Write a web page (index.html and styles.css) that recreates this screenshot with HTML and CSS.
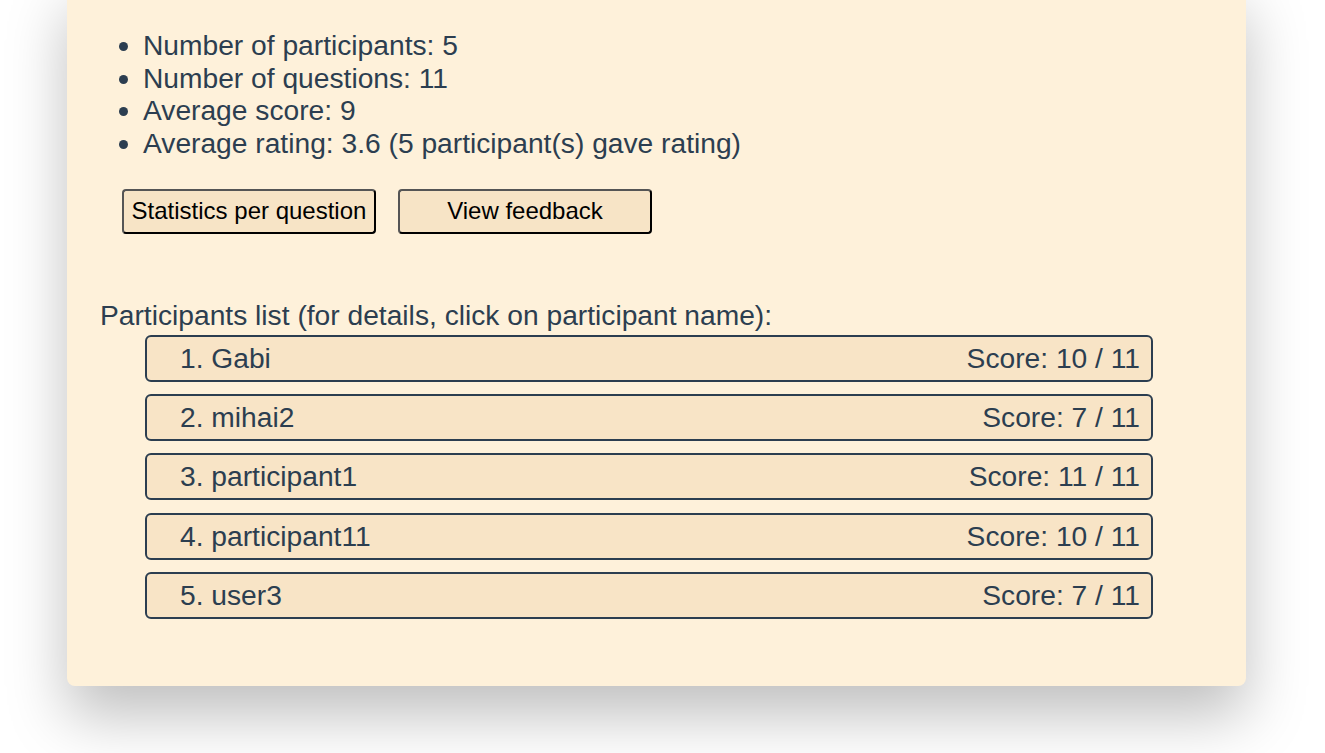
FILE: index.html
```html
<!DOCTYPE html>
<html>
<head>
<meta charset="utf-8">
<link rel="stylesheet" href="styles.css">
</head>
<body>
<div class="card">
  <ul class="stats">
    <li>Number of participants: 5</li>
    <li>Number of questions: 11</li>
    <li>Average score: 9</li>
    <li>Average rating: 3.6 (5 participant(s) gave rating)</li>
  </ul>
  <div class="actions">
    <button class="btn">Statistics per question</button>
    <button class="btn">View feedback</button>
  </div>
  <div class="list-title">Participants list (for details, click on participant name):</div>
  <div class="rows">
    <div class="row"><span>1. Gabi</span><span>Score: 10 / 11</span></div>
    <div class="row"><span>2. mihai2</span><span>Score: 7 / 11</span></div>
    <div class="row"><span>3. participant1</span><span>Score: 11 / 11</span></div>
    <div class="row"><span>4. participant11</span><span>Score: 10 / 11</span></div>
    <div class="row"><span>5. user3</span><span>Score: 7 / 11</span></div>
  </div>
</div>
</body>
</html>
```
FILE: styles.css
```css
html {
  overflow: hidden;
  background: #ffffff;
}
body {
  margin: 0;
  padding: 0 0 1px 0;
  min-height: 780px;
  box-sizing: border-box;
  font-family: "Liberation Sans", Arial, sans-serif;
  color: #2c3e50;
}
.card {
  margin-top: -20px;
  margin-left: 67px;
  width: 1179px;
  box-sizing: border-box;
  background: #fef1da;
  border-radius: 8px;
  box-shadow: 0 30px 60px rgba(0, 0, 0, 0.25);
  padding: 49px 32px 67px 32px;
  display: flex;
  flex-direction: column;
}
.stats {
  margin: 0;
  padding-left: 44px;
  font-size: 28.2px;
  line-height: 32.7px;
}
.actions {
  display: flex;
  gap: 22px;
  margin-top: 29px;
  padding-left: 23px;
}
.btn {
  width: 254px;
  height: 45px;
  box-sizing: border-box;
  font-family: "Liberation Sans", Arial, sans-serif;
  font-size: 24px;
  white-space: nowrap;
  color: #000;
  background: #f7e4c6;
  border: 2px solid;
  border-color: #555 #000 #000 #555;
  border-radius: 4px;
  padding: 0;
  cursor: pointer;
}
.list-title {
  margin-top: 65px;
  padding-left: 1px;
  font-size: 28.2px;
  line-height: 33px;
}
.rows {
  margin-top: 3px;
  margin-left: 46px;
  width: 1008px;
  display: flex;
  flex-direction: column;
  gap: 12.25px;
}
.row {
  height: 47px;
  box-sizing: border-box;
  border: 2px solid #2c3e50;
  border-radius: 6px;
  background: #f8e4c6;
  display: flex;
  justify-content: space-between;
  align-items: center;
  padding: 0 11px 0 33px;
  font-size: 28.2px;
  cursor: pointer;
}
```
